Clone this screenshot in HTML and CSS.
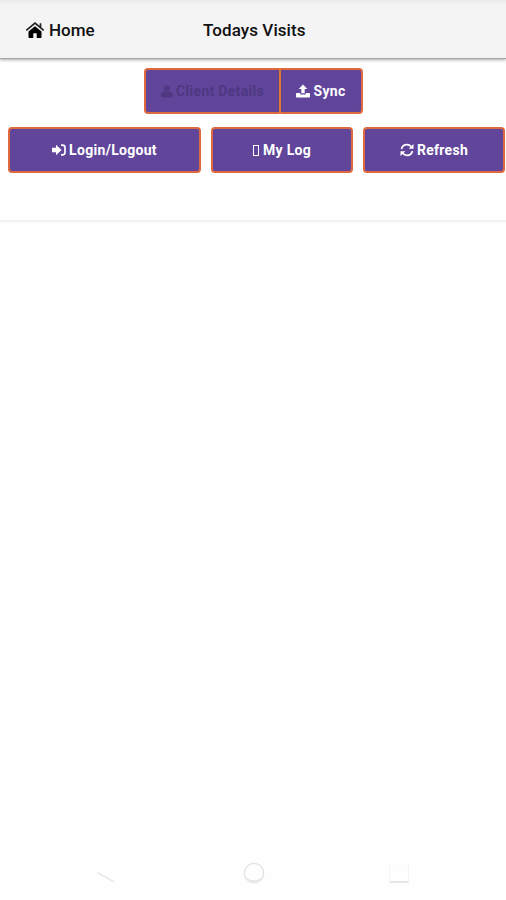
FILE: index.html
```html
<!DOCTYPE html>
<html lang="en">
<head>
<meta charset="utf-8">
<title>Todays Visits</title>
<link rel="stylesheet" href="styles.css">
</head>
<body>
<header class="header">
  <a class="home">
    <svg class="icon-home" viewBox="0 0 20 18"><path d="M10 5.2 3.500 10.600V16.300q0 .7.7.7H8.300V12.200h3.400V17h4.100q.7 0 .7-.7V10.600z"/><path class="roof" d="M1.300 9.400 10 2.200l8.700 7.200M15.500 2.200v4.200"/></svg>
    <span>Home</span>
  </a>
  <h1 class="title">Todays Visits</h1>
</header>
<main class="main">
  <div class="group">
    <button class="btn btn-client" disabled>
      <svg class="icon-user" viewBox="0 0 12 13"><circle cx="6" cy="3.600" r="3.100"/><path d="M3 6.200Q6 8.600 9 6.200q3 .7 3 4.600 0 1.700-1.700 1.700H1.700Q0 12.500 0 10.800 0 6.900 3 6.200z"/></svg>
      <span>Client Details</span>
    </button>
    <button class="btn btn-sync">
      <svg class="icon-upload" viewBox="0 0 14 14"><path d="M7 .5 11.300 5H8.700v4.300H5.300V5H2.700zM.8 9h3.500v1q0 .5.5.5h4.400q.5 0 .5-.5V9h3.500q.8 0 .8.800v2.900q0 .8-.8.8H.8q-.8 0-.8-.8V9.800Q0 9 .8 9z"/></svg>
      <span>Sync</span>
    </button>
  </div>
  <div class="actions">
    <button class="btn btn-login">
      <svg class="icon-login" viewBox="0 0 14 12"><path d="M0 3.800h4V.8L9.600 6 4 11.200V8.200H0z"/><path class="line" d="M9 1.200h1.500q2.500 0 2.500 2.500v4.600q0 2.500-2.500 2.500H9"/></svg>
      <span>Login/Logout</span>
    </button>
    <button class="btn btn-log">
      <i class="glyph-box"></i>
      <span>My Log</span>
    </button>
    <button class="btn btn-refresh">
      <svg class="icon-refresh" viewBox="0 0 14 14"><path class="line" d="M1.500 6Q2.500 1.700 7 1.700q2.600 0 4.300 2M12.500 8Q11.500 12.300 7 12.300q-2.600 0-4.300-2"/><path d="M13.500 1v4.800H8.700zM.5 13V8.200h4.800z"/></svg>
      <span>Refresh</span>
    </button>
  </div>
</main>
<footer class="navbar">
  <svg class="nav-back" viewBox="0 0 20 14"><path d="M1.500 2.500 18 12"/></svg>
  <svg class="nav-home" viewBox="0 0 24 24"><circle cx="12" cy="12" r="9.700"/><path d="M5 18q7 4 14 0"/></svg>
  <i class="nav-recent"></i>
</footer>
</body>
</html>
```
FILE: styles.css
```css
* { box-sizing: border-box; }

body {
  margin: 0;
  height: 900px;
  display: flex;
  flex-direction: column;
  overflow: hidden;
  background: #fefefe;
  color: #111;
  font-family: Roboto, "Liberation Sans", sans-serif;
}

.header {
  height: 59px;
  flex: none;
  display: grid;
  grid-template-columns: 203px 1fr;
  align-items: center;
  padding-top: 2px;
  background: linear-gradient(#e9e9e9, #f4f4f4 4px);
  border-bottom: 1px solid #a4a4a4;
  box-shadow: 0 1px 3px #aaa;
  font-size: 17px;
  font-weight: 500;
}

.home {
  display: flex;
  align-items: center;
  gap: 4px;
  padding-left: 25px;
}

.icon-home { width: 20px; height: 18px; }
.icon-home .roof { fill: none; stroke: #222; stroke-width: 1.7; }

.title {
  margin: 0;
  font-size: 17px;
  font-weight: 500;
  letter-spacing: 0.08px;
}

.main {
  height: 163px;
  flex: none;
  padding-top: 9px;
  border-bottom: 2px solid #f2f2f2;
}

.group {
  display: flex;
  width: 219px;
  margin: 0 0 13px 144px;
}

.actions {
  display: grid;
  grid-template-columns: 193px 142px 142px;
  column-gap: 10px;
  padding-left: 8px;
}

.btn {
  height: 46px;
  display: flex;
  align-items: center;
  justify-content: center;
  padding: 0;
  border: 2px solid #df693f;
  border-radius: 4px;
  background: #61459b;
  color: #fff;
  font: bold 14px Roboto, "Liberation Sans", sans-serif;
  letter-spacing: 0.3px;
  white-space: nowrap;
}

.btn svg { fill: currentColor; flex: none; }
.line { fill: none; stroke: currentColor; stroke-width: 1.7; }

.btn-client {
  width: 136px;
  gap: 3px;
  color: #4e3882;
  border-right: 1px solid #e2782f;
  border-radius: 4px 0 0 4px;
}

.btn-sync {
  width: 83px;
  gap: 3px;
  border-left: 1px solid #e2782f;
  border-radius: 0 4px 4px 0;
}

.btn-login, .btn-refresh { gap: 3px; }
.btn-log { gap: 4px; }

.icon-user { width: 12px; height: 13px; }
.icon-upload { width: 14px; height: 14px; }
.icon-login { width: 14px; height: 12px; }
.icon-refresh { width: 14px; height: 14px; }

.glyph-box {
  width: 6px;
  height: 11px;
  border: 1px solid #fff;
}

.navbar {
  margin-top: auto;
  height: 54px;
  display: grid;
  grid-template-columns: 146px 146px 20px;
  padding-left: 96px;
  align-items: center;
}

.navbar svg { fill: none; stroke: #e2e2e2; stroke-width: 1.3; }
.nav-back { width: 20px; height: 14px; margin-top: 8px; }
.nav-home { width: 24px; height: 24px; }

.nav-recent {
  width: 20px;
  height: 19px;
  margin-left: 1px;
  border: 1px solid #f5f5f5;
  border-top-color: #fcfcfc;
  border-bottom: 2px solid #e6e6e6;
}
```
